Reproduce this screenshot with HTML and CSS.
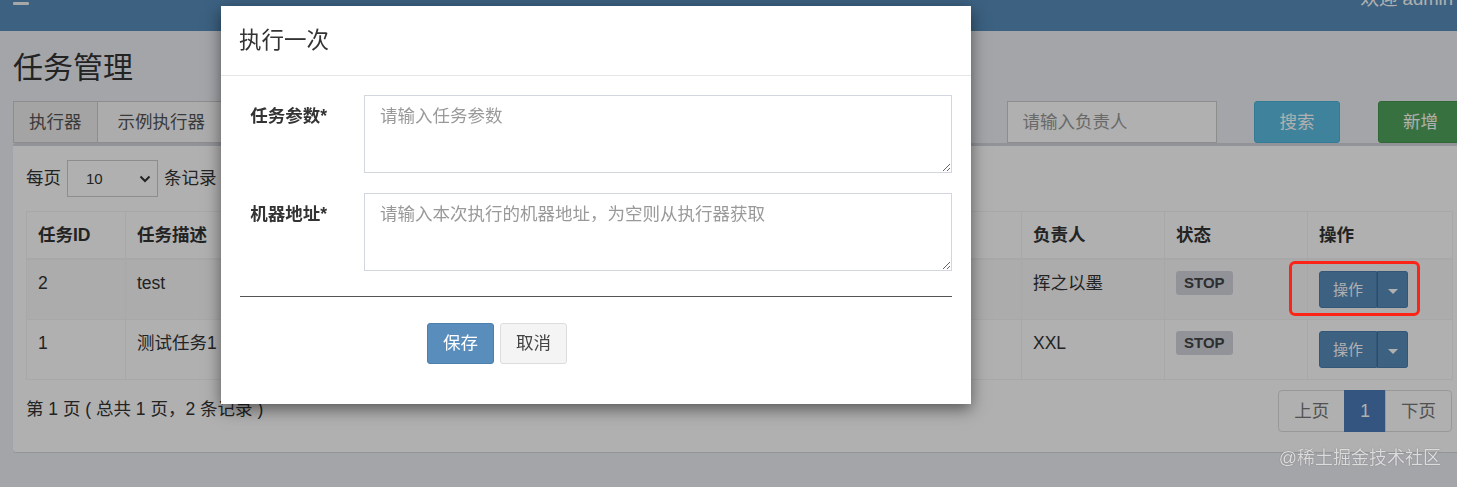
FILE: index.html
```html
<!DOCTYPE html>
<html lang="zh-CN">
<head>
  <meta charset="UTF-8" />
  <meta name="viewport" content="width=device-width, initial-scale=1.0"/>
  <title>任务管理</title>
  <link rel="stylesheet" href="styles.css">
</head>
<body>

  <!-- Top bar -->
  <header class="main-header">
    <span class="menu-bar"></span>
    <span class="user-name">欢迎 admin</span>
  </header>

  <!-- Page content -->
  <main class="content">
    <h1 class="page-title">任务管理</h1>

    <div class="filters">
      <div class="input-group">
        <span class="addon">执行器</span>
        <span class="select-box">示例执行器</span>
      </div>
      <input class="form-input" type="text" placeholder="请输入任务描述">
      <input class="form-input" type="text" placeholder="请输入JobHandler">
      <input class="form-input" type="text" placeholder="请输入负责人">
      <button class="btn btn-info">搜索</button>
      <button class="btn btn-success">新增</button>
    </div>

    <section class="box">
      <div class="length-row">
        每页
        <span class="page-size">10
          <svg width="12" height="8" viewBox="0 0 12 8"><path d="M1.5 1.5 L6 6 L10.5 1.5" fill="none" stroke="#333" stroke-width="2"/></svg>
        </span>
        条记录
      </div>

      <table class="job-table">
        <colgroup>
          <col class="col-id">
          <col class="col-desc">
          <col class="col-type">
          <col class="col-mode">
          <col class="col-owner">
          <col class="col-status">
          <col class="col-action">
        </colgroup>
        <thead>
          <tr>
            <th>任务ID</th>
            <th>任务描述</th>
            <th>调度类型</th>
            <th>运行模式</th>
            <th>负责人</th>
            <th>状态</th>
            <th>操作</th>
          </tr>
        </thead>
        <tbody>
          <tr>
            <td>2</td>
            <td>test</td>
            <td></td>
            <td></td>
            <td>挥之以墨</td>
            <td><span class="label-stop">STOP</span></td>
            <td>
              <div class="btn-group">
                <button class="btn-op">操作</button>
                <button class="btn-caret"><span class="caret"></span></button>
              </div>
            </td>
          </tr>
          <tr>
            <td>1</td>
            <td>测试任务1</td>
            <td></td>
            <td></td>
            <td>XXL</td>
            <td><span class="label-stop">STOP</span></td>
            <td>
              <div class="btn-group">
                <button class="btn-op">操作</button>
                <button class="btn-caret"><span class="caret"></span></button>
              </div>
            </td>
          </tr>
        </tbody>
      </table>

      <div class="table-footer">
        <div class="info">第 1 页 ( 总共 1 页，2 条记录 )</div>
        <ul class="pagination">
          <li><a href="#">上页</a></li>
          <li class="active"><a href="#">1</a></li>
          <li><a href="#">下页</a></li>
        </ul>
      </div>
    </section>
  </main>

  <!-- Modal -->
  <div class="backdrop"></div>
  <div class="modal">
    <div class="modal-header">
      <h4 class="modal-title">执行一次</h4>
    </div>
    <form class="modal-body">
      <div class="form-group">
        <label>任务参数*</label>
        <textarea placeholder="请输入任务参数"></textarea>
      </div>
      <div class="form-group">
        <label>机器地址*</label>
        <textarea placeholder="请输入本次执行的机器地址，为空则从执行器获取"></textarea>
      </div>
      <hr>
      <div class="form-actions">
        <button type="button" class="btn btn-primary">保存</button>
        <button type="button" class="btn btn-default">取消</button>
      </div>
    </form>
  </div>

  <!-- Annotation marks -->
  <div class="highlight"></div>
  <div class="watermark">@稀土掘金技术社区</div>

</body>
</html>
```
FILE: styles.css
```css
* {
  box-sizing: border-box;
}

html, body {
  margin: 0;
  padding: 0;
  height: 100%;
  overflow: hidden;
}

body {
  position: relative;
  font-family: "Liberation Sans", "Noto Sans CJK SC", sans-serif;
  font-size: 17.5px;
  line-height: 25px;
  color: #333;
  background: #ecf0f5;
}

/* Header */
.main-header {
  display: flex;
  justify-content: space-between;
  align-items: flex-start;
  height: 31px;
  padding: 0 4px 0 13px;
  overflow: hidden;
  background: #588dbc;
  color: #fff;
}

.menu-bar {
  width: 16px;
  height: 3px;
  margin-top: 2px;
  background: #f2f2f2;
  border-radius: 1px;
}

.user-name {
  margin-top: -14px;
  font-size: 18.5px;
}

/* Content */
.content {
  width: 1465px;
  padding-left: 13px;
}

.page-title {
  margin: 0;
  padding: 19.5px 0 17.5px;
  font-size: 30px;
  font-weight: normal;
  line-height: 33px;
}

.filters {
  display: grid;
  grid-template-columns: 336px 335px 210px 210px 86px 86px;
  column-gap: 37.5px;
  height: 42px;
}

.input-group {
  display: flex;
  height: 42px;
}

.addon {
  padding: 8px 15px;
  background: #eee;
  border: 1px solid #ccc;
  color: #555;
}

.select-box {
  flex: 1;
  padding: 8px 20px;
  background: #fafafa;
  border: 1px solid #ccc;
  border-left: 0;
  color: #555;
}

.form-input {
  height: 42px;
  padding: 0 15px;
  border: 1px solid #ccc;
  background: #fff;
  font: inherit;
  color: #555;
}

.form-input::placeholder {
  color: #999;
}

.btn {
  height: 42px;
  padding: 7px 15px;
  border: 1px solid transparent;
  border-radius: 3px;
  font-family: inherit;
  font-size: 17.5px;
  line-height: 25px;
  color: #fff;
  cursor: pointer;
}

.btn-info {
  background: #5bbde2;
  border-color: #4cb2db;
}

.btn-success {
  background: #52a45d;
  border-color: #489550;
}

.btn-primary {
  height: 41px;
  background: #588dbc;
  border-color: #4c7eae;
}

.btn-default {
  height: 41px;
  background: #f4f4f4;
  border-color: #ddd;
  color: #444;
}

/* Box */
.box {
  width: 1452px;
  padding: 14px 13px 20px;
  background: #fff;
  border-top: 3px solid #d2d6de;
  border-radius: 3px;
  box-shadow: 0 1px 1px rgba(0, 0, 0, 0.1);
}

.length-row {
  display: flex;
  align-items: center;
  gap: 6px;
  height: 37px;
}

.page-size {
  display: flex;
  align-items: center;
  justify-content: space-between;
  width: 91px;
  height: 37px;
  padding: 0 6px 0 18px;
  border: 1px solid #ccc;
  font-size: 15px;
}

.job-table {
  width: 100%;
  margin-top: 14px;
  border-collapse: collapse;
  table-layout: fixed;
}

.col-id { width: 99px; }
.col-desc { width: 325px; }
.col-type { width: 300px; }
.col-mode { width: 271px; }
.col-owner { width: 143px; }
.col-status { width: 143px; }
.col-action { width: 145px; }

.job-table th,
.job-table td {
  padding: 11px 11px;
  border: 1px solid #f4f4f4;
  text-align: left;
  vertical-align: top;
  line-height: 24px;
  white-space: nowrap;
}

.job-table th {
  border-bottom-width: 2px;
}

.job-table tbody tr:nth-child(odd) {
  background: #f9f9f9;
}

.label-stop {
  display: inline-block;
  padding: 4px 8px;
  font-size: 15px;
  font-weight: bold;
  line-height: 16px;
  color: #444;
  background: #d2d6de;
  border-radius: 3px;
  vertical-align: top;
}

.btn-group {
  display: inline-flex;
  vertical-align: top;
}

.btn-op,
.btn-caret {
  height: 37px;
  background: #588dbc;
  border: 1px solid #4c7eae;
  color: #fff;
  font-family: inherit;
  font-size: 15px;
  line-height: 21px;
  cursor: pointer;
}

.btn-op {
  width: 58px;
  padding: 7px 0;
  border-radius: 3px 0 0 3px;
}

.btn-caret {
  width: 31px;
  padding: 0;
  border-left-color: #436f98;
  border-radius: 0 3px 3px 0;
}

.caret {
  display: inline-block;
  border-top: 5px solid #fff;
  border-left: 5px solid transparent;
  border-right: 5px solid transparent;
  vertical-align: middle;
}

.table-footer {
  display: flex;
  justify-content: space-between;
  align-items: flex-start;
  margin-top: 10px;
}

.info {
  padding-top: 7px;
}

.pagination {
  display: flex;
  margin: 0;
  padding: 0;
  list-style: none;
}

.pagination a {
  display: block;
  margin-left: -1px;
  padding: 7.5px 15px;
  border: 1px solid #ddd;
  background: #fff;
  color: #777;
  text-decoration: none;
}

.pagination li:first-child a {
  margin-left: 0;
  border-radius: 4px 0 0 4px;
}

.pagination li:last-child a {
  border-radius: 0 4px 4px 0;
}

.pagination .active a {
  background: #4b7bb8;
  border-color: #4b7bb8;
  color: #fff;
}

/* Modal */
.backdrop {
  position: fixed;
  top: 0;
  left: 0;
  right: 0;
  bottom: 0;
  background: rgba(0, 0, 0, 0.31);
}

.modal {
  position: absolute;
  top: 6px;
  left: 221px;
  width: 750px;
  background: #fff;
  box-shadow: 0 5px 15px rgba(0, 0, 0, 0.5);
}

.modal-header {
  padding: 19px 18px 18px;
  border-bottom: 1px solid #e5e5e5;
}

.modal-title {
  margin: 0;
  font-size: 22.5px;
  font-weight: normal;
  line-height: 32px;
  color: #333;
}

.modal-body {
  margin: 0;
  padding: 19px 19px 20px;
}

.form-group {
  display: flex;
  gap: 37px;
  margin-bottom: 20px;
}

.form-group label {
  flex: none;
  width: 87px;
  padding-top: 8.75px;
  text-align: right;
  font-weight: bold;
}

.form-group textarea {
  flex: none;
  width: 588px;
  height: 78px;
  padding: 7.5px 15px;
  border: 1px solid #d2d6de;
  font: inherit;
  line-height: 25px;
  color: #555;
  resize: vertical;
}

.form-group textarea::placeholder {
  color: #999;
}

.modal-body hr {
  margin: 25px 0 26px;
  border: 0;
  border-top: 1px solid #555;
}

.form-actions {
  display: flex;
  gap: 6px;
  padding-left: 187px;
  margin-bottom: 20px;
}

/* Annotation */
.highlight {
  position: absolute;
  top: 261px;
  left: 1289px;
  width: 131px;
  height: 55px;
  border: 3px solid #fb2417;
  border-radius: 6px;
}

.watermark {
  position: absolute;
  top: 446px;
  right: 16px;
  font-size: 18px;
  color: #dcdcdc;
  text-shadow: 0 0 1px #666;
}
```
